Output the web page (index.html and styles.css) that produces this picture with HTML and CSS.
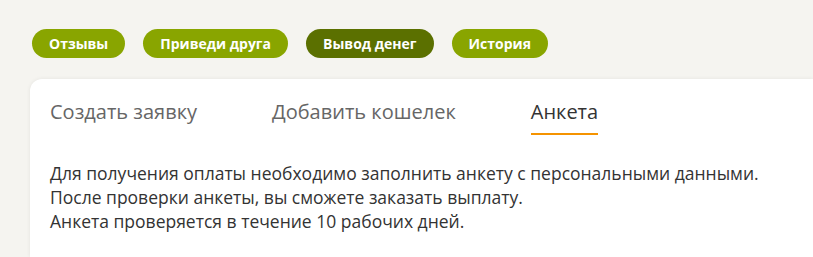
FILE: index.html
```html
<!DOCTYPE html>
<html lang="ru">
<head>
<meta charset="utf-8">
<link rel="stylesheet" href="styles.css">
</head>
<body>
<div class="page">
  <nav class="pills">
    <a class="pill">Отзывы</a>
    <a class="pill">Приведи друга</a>
    <a class="pill pill-active">Вывод денег</a>
    <a class="pill">История</a>
  </nav>
  <section class="card">
    <div class="tabs">
      <span class="tab">Создать заявку</span>
      <span class="tab">Добавить кошелек</span>
      <span class="tab tab-active">Анкета</span>
    </div>
    <div class="content">
      <p>Для получения оплаты необходимо заполнить анкету с персональными данными.</p>
      <p>После проверки анкеты, вы сможете заказать выплату.</p>
      <p>Анкета проверяется в течение 10 рабочих дней.</p>
    </div>
  </section>
</div>
</body>
</html>
```
FILE: styles.css
```css
html, body {
  margin: 0;
  padding: 0;
  background: #f5f4f0;
  font-family: "Open Sans", sans-serif;
  overflow: hidden;
}
.page {
  padding: 29px 0 0 30px;
}
.pills {
  display: flex;
  gap: 18px;
  padding-left: 2px;
}
.pill {
  display: inline-flex;
  align-items: center;
  height: 29px;
  padding: 0 17px;
  border-radius: 15px;
  background: #89a500;
  color: #fff;
  font-weight: 700;
  font-size: 14px;
}
.pill-active {
  background: #5b7000;
}
.card {
  margin-top: 21px;
  background: #fff;
  border-radius: 12px 0 0 0;
  box-shadow: 0 0 4px rgba(0, 0, 0, 0.07);
  padding: 0 20px;
  height: 178px;
}
.tabs {
  display: flex;
  gap: 75px;
  padding-top: 19px;
}
.tab {
  font-size: 20px;
  line-height: 27px;
  color: #666;
  padding-bottom: 8px;
  border-bottom: 2px solid transparent;
}
.tab-active {
  color: #333;
  border-bottom-color: #f59300;
}
.content {
  padding-top: 26px;
  font-size: 17.5px;
  line-height: 24px;
  color: #333;
}
.content p {
  margin: 0;
}
```
